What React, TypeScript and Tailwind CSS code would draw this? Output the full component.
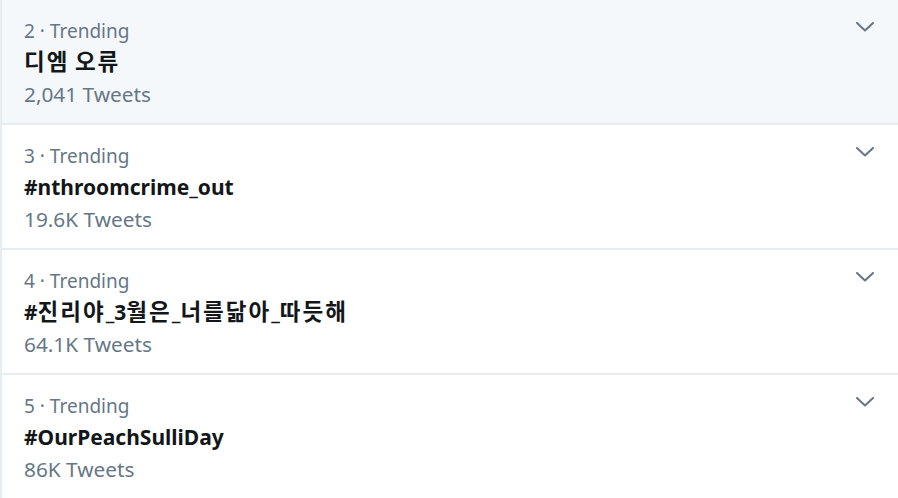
import React from 'react';

const trends = [
  { rank: 2, title: '디엠 오류', count: '2,041 Tweets', active: true },
  { rank: 3, title: '#nthroomcrime_out', count: '19.6K Tweets' },
  { rank: 4, title: '#진리야_3월은_너를닮아_따듯해', count: '64.1K Tweets' },
  { rank: 5, title: '#OurPeachSulliDay', count: '86K Tweets' },
];

// hangul runs render a bit larger, like the reference's Korean font
const Title = ({ text }: { text: string }) => (
  <>
    {text.split(/([\uac00-\ud7a3]+)/).map((part, i) =>
      /[\uac00-\ud7a3]/.test(part) ? (
        <span key={i} className="text-[22.5px] tracking-[2px]">{part}</span>
      ) : (
        <span key={i}>{part}</span>
      ),
    )}
  </>
);

const Chevron = () => (
  <svg width="18" height="10" viewBox="0 0 18 10" fill="none">
    <polyline points="1,1 9,8.5 17,1" stroke="#657786" strokeWidth="2" strokeLinecap="round" strokeLinejoin="round" />
  </svg>
);

export default function App() {
  return (
    <div
      className="h-[498px] w-[898px] overflow-hidden border-l-2 border-[#e6ecf0] bg-white"
      style={{ fontFamily: '"Noto Sans", "Noto Sans CJK KR", sans-serif' }}
    >
      {trends.map((t) => (
        <div
          key={t.rank}
          className={`flex h-[125px] justify-between border-b-2 border-[#e6ecf0] pl-[22px] pr-[24px] pt-[18px] ${t.active ? 'bg-[#f5f8fa]' : 'bg-white'}`}
        >
          <div className="flex flex-col">
            <div className="text-[19px] leading-[26px] text-[#657786]">
              {t.rank} · Trending
            </div>
            <div className="mt-[5px] text-[21px] font-bold leading-[26px] text-[#14171a]">
              <Title text={t.title} />
            </div>
            <div className="mt-[6px] text-[20.8px] leading-[26px] text-[#657786]">{t.count}</div>
          </div>
          <div className="pt-[4px]">
            <Chevron />
          </div>
        </div>
      ))}
    </div>
  );
}
